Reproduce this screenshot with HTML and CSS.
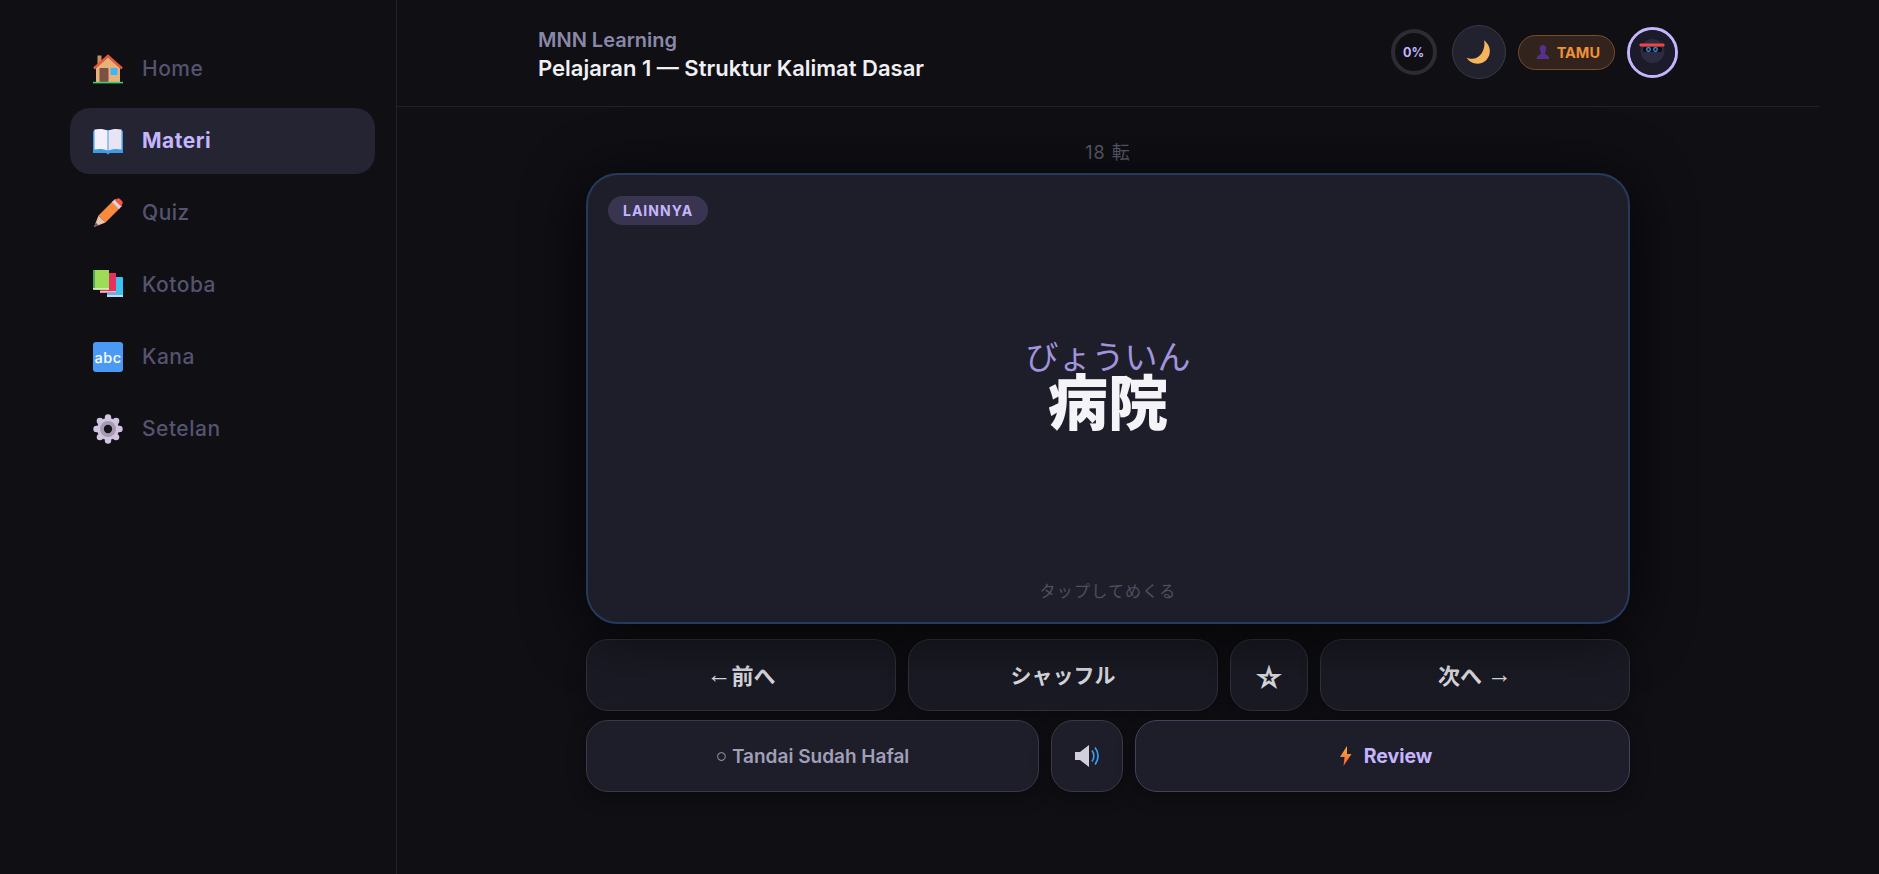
FILE: index.html
```html
<!DOCTYPE html>
<html>
  <head>
    <meta charset="utf-8">
    <title>MNN Learning</title>
    <meta name="viewport" content="width=device-width, initial-scale=1">
    <link rel="stylesheet" href="styles.css">
  </head>

  <body>
    <div class="app">
      <nav class="sidebar">
        <a class="nav-item">
          <svg class="nav-icon" viewBox="0 0 30 30">
            <rect x="4.500" y="1.500" width="4" height="10" fill="#c98d58"/>
            <path d="M3 14 15 3l12 11v14H3z" fill="#e5b27c"/>
            <path d="M1 14.500 15 1.800l14 12.700" fill="none" stroke="#e8583a" stroke-width="2.400"/>
            <rect x="6.500" y="14" width="9" height="14" rx="1" fill="#7b5145"/>
            <rect x="17.500" y="14" width="7" height="7" rx="1" fill="#3db5f6"/>
            <rect x="0" y="27.800" width="30" height="1.600" fill="#3ccf6b"/>
          </svg>
          <span>Home</span>
        </a>
        <a class="nav-item active">
          <svg class="nav-icon" viewBox="0 0 30 30">
            <path d="M0 6c0-1 1-2 2-2h26c1 0 2 1 2 2v21H17l-2 1.500-2-1.500H0z" fill="#3f9be8"/>
            <path d="M1.500 3.500c5-1 10-.5 13 1v20c-3-1.500-8-2-13-1z" fill="#f3effb"/>
            <path d="M28.500 3.500c-5-1-10-.5-13 1v20c3-1.500 8-2 13-1z" fill="#e9e4f5"/>
          </svg>
          <span>Materi</span>
        </a>
        <a class="nav-item">
          <svg class="nav-icon" viewBox="0 0 30 30">
            <path d="M5.500 17.500 20 3l7 7-14.500 14.500z" fill="#f98a3c"/>
            <path d="M19 4 22 1l7 7-3 3z" fill="#dcd3e0"/>
            <path d="M22 2.500l1.500-1.500c1-1 2.500-1 3.500 0l2 2c1 1 1 2.500 0 3.500L27.500 8z" fill="#f9553f"/>
            <path d="M5.500 17.500 1 29l11.500-4.500z" fill="#e8c4a8"/>
            <path d="M2.800 24.500 1 29l4.500-1.800z" fill="#7a4a7a"/>
          </svg>
          <span>Quiz</span>
        </a>
        <a class="nav-item">
          <svg class="nav-icon" viewBox="0 0 30 30">
            <rect x="14" y="7" width="16" height="20" rx="1" fill="#3cc3f0"/>
            <rect x="14" y="25" width="16" height="2" fill="#c9d6f5"/>
            <rect x="7" y="3" width="16" height="20" fill="#e8305f"/>
            <rect x="7" y="21" width="16" height="1.600" fill="#f3b7c8"/>
            <rect x="0" y="0" width="16" height="20" fill="#9cdc58"/>
            <rect x="0" y="0" width="2" height="20" fill="#4fa35a"/>
            <rect x="0" y="18" width="16" height="1.500" fill="#d5e8c4"/>
          </svg>
          <span>Kotoba</span>
        </a>
        <a class="nav-item">
          <svg class="nav-icon" viewBox="0 0 30 30">
            <rect width="30" height="30" rx="3" fill="#4a9af5"/>
            <text x="15" y="20.500" class="abc-text">abc</text>
          </svg>
          <span>Kana</span>
        </a>
        <a class="nav-item">
          <svg class="nav-icon" viewBox="0 0 30 30">
            <g fill="#d0c4de">
              <circle cx="15" cy="3.500" r="3.200"/>
              <circle cx="15" cy="26.500" r="3.200"/>
              <circle cx="3.500" cy="15" r="3.200"/>
              <circle cx="26.500" cy="15" r="3.200"/>
              <circle cx="6.900" cy="6.900" r="3.200"/>
              <circle cx="23.100" cy="6.900" r="3.200"/>
              <circle cx="6.900" cy="23.100" r="3.200"/>
              <circle cx="23.100" cy="23.100" r="3.200"/>
              <circle cx="15" cy="15" r="11"/>
            </g>
            <circle cx="15" cy="15" r="8" fill="#a59cb2"/>
            <circle cx="15" cy="15" r="4.200" fill="#16151c"/>
          </svg>
          <span>Setelan</span>
        </a>
      </nav>

      <main class="main">
        <header class="topbar">
          <div class="topbar-inner">
            <div class="titles">
              <div class="brand">MNN Learning</div>
              <div class="lesson">Pelajaran 1 — Struktur Kalimat Dasar</div>
            </div>
            <div class="controls">
              <div class="ring">0%</div>
              <div class="round-btn">
                <svg class="moon" viewBox="0 0 24 24">
                  <path d="M17 1c3.500 3 5.500 6.500 5 11-.6 6-5.500 10-11 10-4 0-7.500-2-9.500-5.500 1.500 1 3.500 1.300 5.500 1.100C13.500 17 18.500 9.500 17 1z" fill="#f6b45c"/>
                </svg>
              </div>
              <div class="guest-pill">
                <svg class="guest-icon" viewBox="0 0 16 16">
                  <path d="M8 1c2 0 3.200 1.500 3.200 3.500S10 8.500 10 9.500c0 1 4 1.500 4.500 5.500h-13C2 11 6 10.500 6 9.500S4.800 6.500 4.800 4.500 6 1 8 1z" fill="#55308f"/>
                </svg>
                <span>TAMU</span>
              </div>
              <div class="avatar">
                <svg viewBox="0 0 45 45">
                  <circle cx="22.500" cy="22.500" r="22.500" fill="#1b1b2c"/>
                  <circle cx="22.500" cy="21" r="12" fill="#2c2b3f"/>
                  <rect x="13" y="17" width="19" height="5" rx="2" fill="#0c0c12"/>
                  <rect x="9.500" y="13.500" width="25" height="3" rx="1" fill="#ef4444"/>
                  <circle cx="18.500" cy="19.500" r="1.800" fill="none" stroke="#3b9cf0" stroke-width="1.200"/>
                  <circle cx="25.500" cy="19.500" r="1.800" fill="none" stroke="#3b9cf0" stroke-width="1.200"/>
                </svg>
              </div>
            </div>
          </div>
        </header>

        <section class="study">
          <div class="counter">18 転</div>
          <div class="card">
            <span class="badge">LAINNYA</span>
            <div class="word">
              <div class="reading">びょういん</div>
              <div class="kanji">病院</div>
            </div>
            <div class="hint">タップしてめくる</div>
          </div>

          <div class="btn-row top-row">
            <button class="btn step"><span class="arrow">←</span>前へ</button>
            <button class="btn">シャッフル</button>
            <button class="btn star">☆</button>
            <button class="btn step">次へ <span class="arrow">→</span></button>
          </div>
          <div class="btn-row bottom-row">
            <button class="btn soft muted"><span class="dot">○</span> Tandai Sudah Hafal</button>
            <button class="btn soft">
              <svg class="speaker" viewBox="0 0 28 24">
                <path d="M2 8h5l9-7v22l-9-7H2z" fill="#d2cfdc"/>
                <path d="M19 6.500c2.500 3 2.500 8 0 11M22 3.500c4 5 4 12 0 17" fill="none" stroke="#3b9cf0" stroke-width="1.700"/>
              </svg>
            </button>
            <button class="btn soft review">
              <svg class="bolt" viewBox="0 0 12 20">
                <defs>
                  <linearGradient id="boltFill" x1="0" y1="0" x2="0" y2="1">
                    <stop offset="0" stop-color="#fbb03b"/>
                    <stop offset="1" stop-color="#ef5a3c"/>
                  </linearGradient>
                </defs>
                <path d="M7 0 0 11h4.500L3.500 20 11.500 8H7z" fill="url(#boltFill)"/>
              </svg>
              <span>Review</span>
            </button>
          </div>
        </section>
      </main>
    </div>
  </body>
</html>
```

FILE: styles.css
```css
* {
  box-sizing: border-box;
}

html,
body {
  margin: 0;
  height: 100%;
  overflow: hidden;
}

body {
  background: #0f0f14;
  color: #f0f0f5;
  font-family: "Inter", "Noto Sans CJK JP", sans-serif;
}

.app {
  display: flex;
  height: 874px;
}

.sidebar {
  display: flex;
  flex-direction: column;
  gap: 6px;
  flex: 0 0 397px;
  padding: 36px 21px 0 70px;
  border-right: 1px solid #22222a;
}

.nav-item {
  display: flex;
  align-items: center;
  gap: 19px;
  height: 66px;
  padding: 0 23px;
  border-radius: 20px;
  color: #55536f;
  font-size: 21px;
  font-weight: 500;
  letter-spacing: 0.5px;
}

.nav-item span {
  padding-bottom: 2px;
}

.nav-item.active {
  background: #252433;
  color: #c4b5fd;
  font-weight: 700;
}

.nav-icon {
  flex: 0 0 30px;
  width: 30px;
  height: 30px;
}

.abc-text {
  fill: #fff;
  font-family: "Inter", sans-serif;
  font-size: 14.500px;
  font-weight: 500;
  text-anchor: middle;
}

.main {
  flex: 1;
  padding-right: 60px;
}

.topbar {
  height: 107px;
  border-bottom: 1px solid #22222a;
}

.topbar-inner {
  display: flex;
  align-items: center;
  justify-content: space-between;
  width: 1140px;
  height: 100%;
  margin: 0 auto;
  padding-bottom: 2px;
}

.titles {
  padding-top: 5px;
}

.brand {
  color: #8a88a8;
  font-size: 20px;
  font-weight: 600;
  line-height: 26px;
}

.lesson {
  color: #f0f0f5;
  font-size: 22px;
  font-weight: 600;
  line-height: 30px;
}

.controls {
  display: flex;
  align-items: center;
  gap: 12px;
}

.ring {
  display: flex;
  align-items: center;
  justify-content: center;
  width: 46px;
  height: 46px;
  margin-right: 3px;
  border: 4px solid #2c2c32;
  border-radius: 50%;
  color: #c4b5fd;
  font-size: 12.500px;
  font-weight: 700;
}

.round-btn {
  display: flex;
  align-items: center;
  justify-content: center;
  width: 54px;
  height: 54px;
  border: 1px solid #3a3a46;
  border-radius: 50%;
  background: #22222e;
}

.moon {
  width: 27px;
  height: 27px;
}

.guest-pill {
  display: flex;
  align-items: center;
  gap: 6px;
  height: 35px;
  padding: 0 14px 0 16px;
  border: 1px solid #7a4c28;
  border-radius: 18px;
  background: #32241d;
  color: #f0913a;
  font-size: 14.500px;
  font-weight: 700;
}

.guest-icon {
  width: 16px;
  height: 16px;
}

.avatar {
  width: 51px;
  height: 51px;
  border: 3px solid #c4b5fd;
  border-radius: 50%;
  overflow: hidden;
}

.avatar svg {
  display: block;
  width: 45px;
  height: 45px;
}

.study {
  display: flex;
  flex-direction: column;
  width: 1044px;
  margin: 0 auto;
}

.counter {
  height: 66px;
  padding-top: 34px;
  color: #5a5a6e;
  font-size: 18px;
  letter-spacing: 1px;
  line-height: 24px;
  text-align: center;
}

.card {
  position: relative;
  display: flex;
  flex-direction: column;
  align-items: center;
  height: 451px;
  border: 2px solid #253a5c;
  border-radius: 32px;
  background: #1e1e2a;
  box-shadow: 0 8px 60px rgba(0, 0, 0, 0.7);
}

.badge {
  position: absolute;
  top: 21px;
  left: 20px;
  height: 29px;
  padding: 0 15px;
  border-radius: 15px;
  background: #393550;
  color: #c4b5fd;
  font-size: 14px;
  font-weight: 700;
  letter-spacing: 1px;
  line-height: 29px;
}

.word {
  margin-top: 166px;
  text-align: center;
}

.reading {
  color: #a294dc;
  font-size: 33px;
  line-height: 33px;
}

.kanji {
  color: #f4f4f8;
  font-size: 60px;
  font-weight: 900;
  line-height: 59px;
}

.hint {
  position: absolute;
  right: 0;
  bottom: 20px;
  left: 0;
  color: #4f4f62;
  font-size: 16px;
  letter-spacing: 1.200px;
  text-align: center;
}

.btn-row {
  display: grid;
  gap: 12px;
}

.top-row {
  grid-template-columns: 1fr 1fr 78px 1fr;
  margin-top: 15px;
}

.top-row .btn {
  padding-bottom: 2px;
}

.bottom-row {
  grid-template-columns: 453px 72px 1fr;
  margin-top: 9px;
}

.btn {
  display: flex;
  align-items: center;
  justify-content: center;
  height: 72px;
  padding: 0;
  border: 1px solid #30303a;
  border-radius: 22px;
  background: #1a1a24;
  box-shadow: 0 4px 20px rgba(0, 0, 0, 0.3);
  color: #d8d8de;
  font-family: inherit;
  font-size: 21px;
  font-weight: 700;
  white-space: pre;
}

.btn.soft {
  background: #1e1e2a;
  border-color: #3a3a46;
}

.btn.muted {
  color: #a09fb8;
  font-size: 19px;
  font-weight: 600;
}

.btn.step {
  font-size: 22px;
}

.arrow {
  font-family: "Liberation Sans", sans-serif;
  font-size: 25px;
  font-weight: 400;
}

.dot {
  font-family: "Liberation Sans", sans-serif;
  font-weight: 400;
}

.top-row .btn.star {
  padding: 6px 0 0;
  font-size: 30px;
}

.speaker {
  width: 28px;
  height: 24px;
}

.review {
  gap: 12px;
  color: #c4b5fd;
}

.btn.review {
  padding-left: 7px;
  border-color: #44405c;
  font-size: 19.500px;
}

.bolt {
  width: 12px;
  height: 20px;
}
```
